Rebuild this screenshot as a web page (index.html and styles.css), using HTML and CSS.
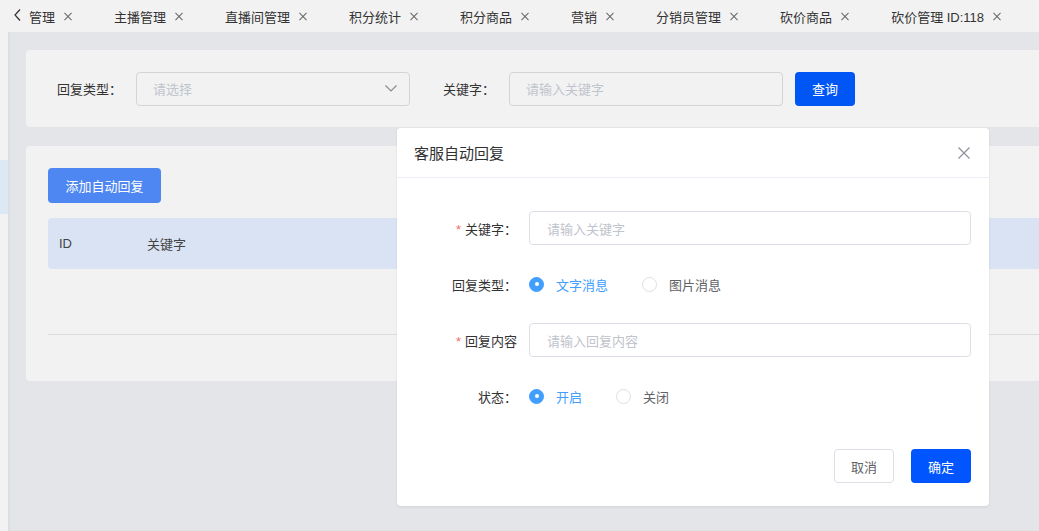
FILE: index.html
```html
<!DOCTYPE html>
<html lang="zh">
<head>
    <meta charset="UTF-8">
    <title>客服自动回复</title>
    <link rel="stylesheet" href="styles.css">
</head>
<body>
<div class="layout">
    <div class="side">
        <div class="side-active"></div>
    </div>
    <div class="main">
        <div class="tabs">
            <span class="tabs-prev">
                <svg width="7" height="12" viewBox="0 0 7 12"><path d="M6 0.5L1 6l5 5.5" fill="none" stroke="#333" stroke-width="1.2"/></svg>
            </span>
            <div class="tab-item">管理<i class="tab-close"></i></div>
            <div class="tab-item">主播管理<i class="tab-close"></i></div>
            <div class="tab-item">直播间管理<i class="tab-close"></i></div>
            <div class="tab-item">积分统计<i class="tab-close"></i></div>
            <div class="tab-item">积分商品<i class="tab-close"></i></div>
            <div class="tab-item">营销<i class="tab-close"></i></div>
            <div class="tab-item">分销员管理<i class="tab-close"></i></div>
            <div class="tab-item">砍价商品<i class="tab-close"></i></div>
            <div class="tab-item">砍价管理 ID:118<i class="tab-close"></i></div>
        </div>

        <div class="content">
            <div class="card search-card">
                <span class="search-label">回复类型：</span>
                <div class="search-input select">
                    <span class="placeholder">请选择</span>
                    <svg width="12" height="7" viewBox="0 0 12 7"><path d="M0.5 0.5L6 6l5.5-5.5" fill="none" stroke="#8c8c8c" stroke-width="1.2"/></svg>
                </div>
                <span class="search-label kw">关键字：</span>
                <div class="search-input">
                    <span class="placeholder">请输入关键字</span>
                </div>
                <button class="btn btn-primary">查询</button>
            </div>

            <div class="card list-card">
                <button class="btn btn-add">添加自动回复</button>
                <div class="table-head">
                    <span class="col-id">ID</span>
                    <span>关键字</span>
                </div>
                <div class="table-body"></div>
            </div>
        </div>
    </div>
</div>

<div class="dialog">
    <div class="dialog-header">
        <span class="dialog-title">客服自动回复</span>
        <svg class="dialog-close" width="12" height="12" viewBox="0 0 12 12"><path d="M0.5 0.5l11 11M11.5 0.5l-11 11" stroke="#909399" stroke-width="1.3"/></svg>
    </div>
    <div class="dialog-body">
        <div class="form-row">
            <label class="form-label"><em>*</em>关键字：</label>
            <div class="form-input"><span class="placeholder">请输入关键字</span></div>
        </div>
        <div class="form-row">
            <label class="form-label">回复类型：</label>
            <div class="radio-group">
                <span class="radio checked"><i></i>文字消息</span>
                <span class="radio"><i></i>图片消息</span>
            </div>
        </div>
        <div class="form-row">
            <label class="form-label"><em>*</em>回复内容</label>
            <div class="form-input"><span class="placeholder">请输入回复内容</span></div>
        </div>
        <div class="form-row">
            <label class="form-label">状态：</label>
            <div class="radio-group">
                <span class="radio checked"><i></i>开启</span>
                <span class="radio"><i></i>关闭</span>
            </div>
        </div>
    </div>
    <div class="dialog-footer">
        <button class="btn btn-default">取消</button>
        <button class="btn btn-confirm">确定</button>
    </div>
</div>
</body>
</html>
```

FILE: styles.css
```css
* {
    box-sizing: border-box;
}
html, body {
    margin: 0;
    height: 100%;
    overflow: hidden;
}
body {
    font-family: "Liberation Sans", "Noto Sans CJK SC", sans-serif;
    font-size: 13px;
    color: #333;
    background: #e4e5e8;
}
.layout {
    display: flex;
    height: 100%;
}
.side {
    width: 8px;
    flex: none;
    background: #f2f2f2;
    padding-top: 160px;
}
.side-active {
    height: 54px;
    background: #dce8f3;
}
.main {
    flex: 1;
    min-width: 0;
    box-shadow: inset 2px 0 2px rgba(0, 0, 0, .03);
}
.tabs {
    position: relative;
    display: flex;
    height: 32px;
    background: #f2f2f2;
    white-space: nowrap;
    overflow: hidden;
}
.tabs-prev {
    position: absolute;
    left: 6px;
    top: 9px;
    line-height: 0;
}
.tab-item {
    display: flex;
    align-items: center;
    padding: 0 21px;
    color: #333;
}
.tab-close {
    width: 8px;
    height: 8px;
    margin-left: 9px;
    position: relative;
}
.tab-close::before,
.tab-close::after {
    content: "";
    position: absolute;
    left: -1px;
    top: 3.5px;
    width: 10px;
    height: 1px;
    background: #666;
    transform: rotate(45deg);
}
.tab-close::after {
    transform: rotate(-45deg);
}
.content {
    padding: 18px 0 0 18px;
}
.card {
    background: #f2f2f2;
    border-radius: 4px 0 0 4px;
}
.search-card {
    display: flex;
    align-items: center;
    height: 77px;
    padding: 0 31px;
}
.search-label {
    margin-right: 14px;
}
.search-label.kw {
    margin-left: 33px;
}
.search-input {
    display: flex;
    align-items: center;
    justify-content: space-between;
    width: 274px;
    height: 34px;
    padding: 0 12px 0 16px;
    border: 1px solid #d4d4d6;
    border-radius: 4px;
}
.placeholder {
    color: #c0c4cc;
}
.btn {
    font: inherit;
    height: 34px;
    border: none;
    border-radius: 4px;
    cursor: pointer;
}
.btn-primary {
    width: 60px;
    margin-left: 12px;
    background: #0055f5;
    color: #fff;
}
.list-card {
    margin-top: 19px;
    height: 235px;
    padding: 22px 0 0 22px;
}
.btn-add {
    display: block;
    width: 113px;
    height: 35px;
    background: #4e86f2;
    color: #fff;
}
.table-head {
    display: flex;
    align-items: center;
    height: 51px;
    margin-top: 15px;
    padding-left: 11px;
    background: #d9e3f3;
    border-radius: 4px 0 0 4px;
    color: #444;
}
.col-id {
    width: 88px;
}
.table-body {
    height: 66px;
    border-bottom: 1px solid #dcdcdc;
}

/* dialog */
.dialog {
    position: absolute;
    left: 397px;
    top: 128px;
    width: 592px;
    height: 378px;
    background: #fff;
    border-radius: 4px;
    box-shadow: 0 1px 3px rgba(0, 0, 0, .08);
}
.dialog-header {
    display: flex;
    align-items: center;
    justify-content: space-between;
    height: 50px;
    padding: 0 19px 0 17px;
    border-bottom: 1px solid #ebeef5;
}
.dialog-title {
    font-size: 15px;
    color: #303133;
}
.dialog-body {
    padding: 33px 18px 0 0;
}
.form-row {
    display: flex;
    align-items: center;
    height: 34px;
    margin-bottom: 22px;
}
.form-label {
    width: 132px;
    padding-right: 12px;
    text-align: right;
    color: #333;
}
.form-label em {
    font-style: normal;
    color: #f56c6c;
    margin-right: 4px;
}
.form-input {
    flex: 1;
    display: flex;
    align-items: center;
    height: 34px;
    padding: 0 17px;
    border: 1px solid #dcdfe6;
    border-radius: 4px;
}
.radio-group {
    display: flex;
}
.radio {
    display: flex;
    align-items: center;
    margin-right: 34px;
    color: #606266;
}
.radio i {
    width: 15px;
    height: 15px;
    margin-right: 12px;
    border: 1px solid #dcdfe6;
    border-radius: 50%;
    position: relative;
}
.radio.checked {
    color: #409eff;
}
.radio.checked i {
    background: #409eff;
    border-color: #409eff;
}
.radio.checked i::after {
    content: "";
    position: absolute;
    left: 4.5px;
    top: 4.5px;
    width: 4px;
    height: 4px;
    border-radius: 50%;
    background: #fff;
}
.dialog-footer {
    display: flex;
    justify-content: flex-end;
    gap: 17px;
    padding: 14px 18px 0 0;
}
.btn-default {
    width: 60px;
    background: #fff;
    border: 1px solid #dcdfe6;
    color: #606266;
}
.btn-confirm {
    width: 60px;
    background: #0055ff;
    color: #fff;
}
```
